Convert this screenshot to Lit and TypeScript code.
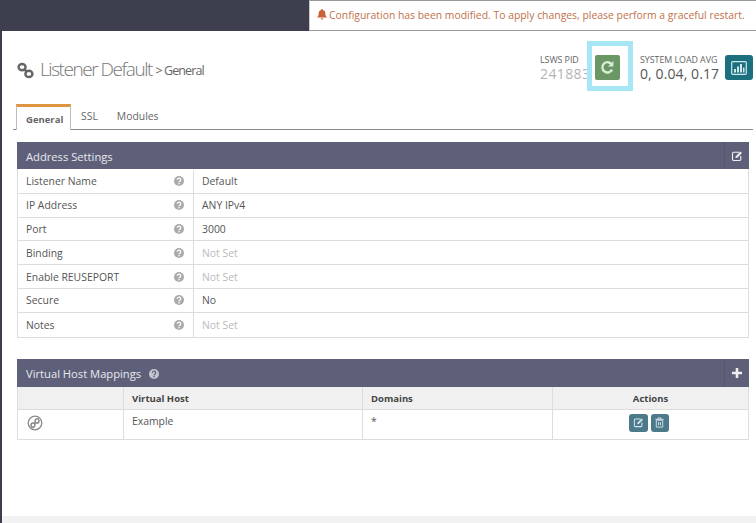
import { LitElement, html, css, svg } from "lit";
import { customElement } from "lit/decorators.js";

const help = html`<svg class="help" viewBox="0 0 12 12"><circle cx="6" cy="6" r="5" fill="currentColor"/><path d="M4.300 4.900a1.700 1.600 0 1 1 2.600 1.300c-.6.4-.9.5-.9 1.200" fill="none" stroke="var(--q, #fff)" stroke-width="1.200"/><rect x="5.300" y="8.100" width="1.400" height="1.300" fill="var(--q, #fff)"/></svg>`;
const editPaths = svg`<path d="M11 3H3.500A1.500 1.500 0 0 0 2 4.500v8A1.500 1.500 0 0 0 3.500 14h8a1.500 1.500 0 0 0 1.500-1.500V8" fill="none" stroke="currentColor" stroke-width="1.500"/><path d="M6.500 8.200 12.600 2l2 2-6.200 6.200-2.400.4z" fill="currentColor"/>`;
const edit = html`<svg viewBox="0 0 16 16">${editPaths}</svg>`;
const link = svg`<g fill="none" stroke="currentColor" stroke-width="2.300"><ellipse cx="4.800" cy="4.800" rx="3.300" ry="3"/><ellipse cx="11.200" cy="11.200" rx="3.300" ry="3"/><path d="M7 7l2 2"/></g>`;

const rows: [string, string, boolean][] = [
  ["Listener Name", "Default", false],
  ["IP Address", "ANY IPv4", false],
  ["Port", "3000", false],
  ["Binding", "Not Set", true],
  ["Enable REUSEPORT", "Not Set", true],
  ["Secure", "No", false],
  ["Notes", "Not Set", true],
];

@customElement("app-root")
export class AppRoot extends LitElement {
  static styles = css`
    :host { display: block; width: 756px; height: 523px; overflow: hidden; position: relative; background: #3d3e4e; font-family: "Open Sans", sans-serif; font-size: 10.4px; color: #555; }
    .top { height: 31px; }
    .alert { position: absolute; left: 309px; top: 0; width: 447px; height: 31px; box-sizing: border-box; background: #fff; border: 1px solid #c8c8c8; border-top-color: #999; border-bottom-color: #999; border-right: 0; color: #c0714a; display: flex; align-items: center; gap: 2px; padding: 0 0 2px 7px; font-size: 10.4px; white-space: nowrap; }
    .alert svg { width: 10px; height: 11px; color: #c9623a; flex: none; }
    .main { margin-left: 2px; height: 485px; background: #fff; padding: 0 7px 0 15px; box-sizing: border-box; overflow: hidden; }
    .foot { margin-left: 2px; height: 7px; background: #f2f2f2; }
    .head { display: flex; height: 73px; align-items: flex-start; }
    .title { display: flex; align-items: center; gap: 6px; margin-top: 27px; color: #777; white-space: nowrap; }
    .title svg { width: 17px; height: 17px; color: #666; }
    .h1 { font-size: 19px; font-weight: 300; letter-spacing: -1.45px; line-height: 22px; }
    .h1 small { font-size: 12.5px; font-weight: 400; letter-spacing: -.9px; color: #666; vertical-align: 1px; }
    .stats { margin-left: auto; display: flex; align-items: flex-start; margin-right: -4px; padding-top: 23px; }
    .stat { display: flex; flex-direction: column; line-height: 12px; font-size: 8.9px; color: #666; letter-spacing: -.05px; white-space: nowrap; }
    .stat b { font-weight: 400; font-size: 14px; line-height: 16px; letter-spacing: .1px; }
    .pid { width: 100px; }
    .pid b { color: #b4b4b4; letter-spacing: .4px; }
    .load { width: 80px; }
    .load b { color: #555; }
    .hl { position: absolute; left: 587px; top: 41px; width: 46px; height: 50px; box-sizing: border-box; border: 5px solid #a6e6f5; background: #fff; display: flex; align-items: flex-start; padding: 9px 0 0 3px; }
    .restart { width: 25px; height: 25px; border-radius: 2px; background: #6a9765; color: #d9efd4; display: flex; align-items: center; justify-content: center; }
    .restart svg { width: 15px; height: 15px; }
    .chart { width: 28px; height: 25px; margin-left: 5px; margin-top: 1px; border-radius: 3px; background: #1c6f7f; color: #cfe9ee; display: flex; align-items: center; justify-content: center; }
    .chart svg { width: 16px; height: 14px; }
    .tabs { display: flex; height: 25px; border-bottom: 1px solid #8a8a8a; margin: 0 -4px 0 -4px; padding-left: 3px; }
    .tab { padding: 5px 9px 0 9px; font-size: 10.4px; color: #666; }
    .tab.on { box-sizing: border-box; width: 55px; height: 26px; margin: 0 0 -1px 0; padding: 5px 0 0 9px; background: #fff; border: 1px solid #bbb; border-top: 3px solid #dd9540; border-bottom: 0; font-size: 9.5px; font-weight: 700; line-height: 16px; }
    .tab.m2 { padding-left: 10px; }
    .tab.m3 { padding-left: 10px; }
    .wg { margin-top: 12px; }
    .wg.second { margin-top: 21px; }
    .wg.second .bar { height: 28px; }
    .bar { height: 27px; box-sizing: border-box; background: #5e6079; color: #e8e8ef; display: flex; align-items: center; padding: 2px 0 0 9px; font-size: 11.2px; position: relative; --q: #5e6079; }
    .bar .help { margin-left: 7px; color: #c4c5d0; width: 12px; height: 12px; }
    .bar .act { position: absolute; right: 0; top: 0; bottom: 0; width: 24px; display: flex; align-items: center; justify-content: center; color: #eee; border-left: 1px solid #55566d; }
    .bar .act svg { width: 12px; height: 12px; }
    .props { border: 1px solid #ddd; border-top: 0; padding-top: 1px; }
    .row { display: grid; grid-template-columns: 176px 1fr; height: 23.8px; border-bottom: 1px solid #ddd; box-sizing: border-box; align-items: stretch; }
    .row:last-child { border-bottom: 0; }
    .k { display: flex; align-items: center; padding: 0 8px; justify-content: space-between; border-right: 1px solid #ddd; color: #555; }
    .k .help { width: 12px; height: 12px; color: #aaa; }
    .v { display: flex; align-items: center; padding-left: 8px; color: #555; }
    .v.off { color: #bbb; }
    .grid { display: grid; grid-template-columns: 106px 239px 190px 1fr; border: 1px solid #ddd; border-top: 0; }
    .th { height: 23px; background: #f0f0f0; border-bottom: 1px solid #ddd; border-right: 1px solid #ddd; box-sizing: border-box; padding: 1px 0 0 8px; display: flex; align-items: center; font-size: 9.5px; font-weight: 700; color: #444; }
    .th.c { justify-content: center; padding: 1px 0 0 0; border-right: 0; }
    .td { height: 29px; border-right: 1px solid #ddd; box-sizing: border-box; padding: 4px 0 0 8px; }
    .td.ic { color: #8a8a8a; padding: 5px 0 0 9px; }
    .td.ic svg { width: 16px; height: 16px; display: block; }
    .td.acts { display: flex; gap: 3px; justify-content: center; padding: 4px 4px 0 0; border-right: 0; }
    .btn { height: 18px; width: 19px; border-radius: 3px; background: #4d7a8a; color: #d6e6ec; display: flex; align-items: center; justify-content: center; }
    .btn.sm { width: 18px; }
    .btn svg { width: 11px; height: 11px; }
  `;

  render() {
    return html`
      <div class="top"></div>
      <div class="alert">
        <svg viewBox="0 0 12 13"><path fill="currentColor" d="M6 0a1 1 0 0 1 1 1.100c2.200.5 3 2.100 3 4.400 0 2.300 1.100 3.400 2 4.500H0c.9-1.100 2-2.200 2-4.500 0-2.300.8-3.900 3-4.400A1 1 0 0 1 6 0zM4.500 11h3a1.500 1.500 0 0 1-3 0z"/></svg>
        <span>Configuration has been modified. To apply changes, please perform a graceful restart.</span>
      </div>
      <div class="main">
        <div class="head">
          <div class="title">
            <svg viewBox="0 0 16 16">${link}</svg>
            <span class="h1">Listener Default <small>&gt; General</small></span>
          </div>
          <div class="stats">
            <div class="stat pid">LSWS PID<b>241883</b></div>
            <div class="stat load">SYSTEM LOAD AVG<b>0, 0.04, 0.17</b></div>
            <div class="chart"><svg viewBox="0 0 16 14"><rect x=".7" y=".7" width="14.6" height="12.6" rx="1" fill="none" stroke="currentColor" stroke-width="1.2"/><path fill="currentColor" d="M3 8h2v3.500H3zM6 5.500h2v6H6zM9 3h2v8.500H9zM12 6.500h1.500v5H12z"/></svg></div>
          </div>
        </div>
        <div class="tabs">
          <div class="tab on">General</div>
          <div class="tab m2">SSL</div>
          <div class="tab m3">Modules</div>
        </div>
        <div class="wg">
          <div class="bar">Address Settings<span class="act">${edit}</span></div>
          <div class="props">
            ${rows.map(([k, v, off]) => html`<div class="row"><div class="k"><span>${k}</span>${help}</div><div class="v ${off ? "off" : ""}">${v}</div></div>`)}
          </div>
        </div>
        <div class="wg second">
          <div class="bar">Virtual Host Mappings ${help}<span class="act"><svg viewBox="0 0 12 12"><path d="M6 1v10M1 6h10" stroke="currentColor" stroke-width="2.600" fill="none"/></svg></span></div>
          <div class="grid">
            <div class="th"></div><div class="th">Virtual Host</div><div class="th">Domains</div><div class="th c">Actions</div>
            <div class="td ic"><svg viewBox="0 0 16 16"><circle cx="8" cy="8" r="6.8" fill="none" stroke="currentColor" stroke-width="1.300"/><g transform="rotate(90 8 8) translate(2.900 2.900) scale(.64)">${link}</g></svg></div>
            <div class="td">Example</div>
            <div class="td">*</div>
            <div class="td acts">
              <div class="btn">${edit}</div>
              <div class="btn sm"><svg viewBox="0 0 12 12"><path d="M2.500 3.500h7V11h-7zM1.500 2.500h9M4.500 2.500V1h3v1.500M5 5.500v3.500M7 5.500v3.500" fill="none" stroke="currentColor" stroke-width="1"/></svg></div>
            </div>
          </div>
        </div>
      </div>
      <div class="foot"></div>
      <div class="hl"><div class="restart"><svg viewBox="0 0 14 14"><path d="M11.300 9A4.800 4.800 0 1 1 10.800 3.900" fill="none" stroke="currentColor" stroke-width="2.200"/><path d="M12.500 1v5h-5z" fill="currentColor"/></svg></div></div>
    `;
  }
}
